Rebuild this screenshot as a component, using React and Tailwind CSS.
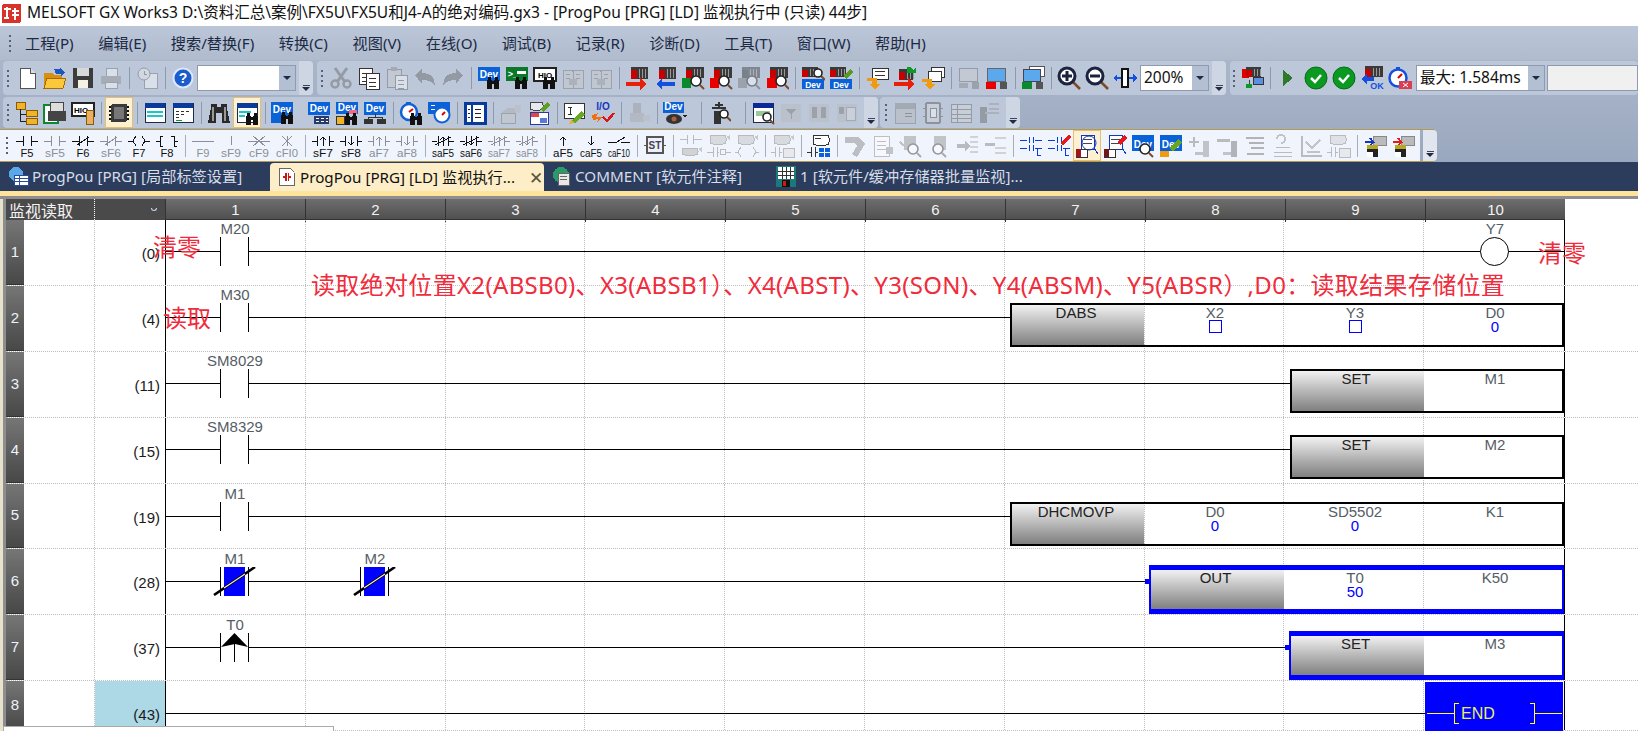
import React from 'react';

const MONO = 'Liberation Sans, sans-serif';

function Ic({ children }) {
  return (
    <svg viewBox="0 0 24 24" width="24" height="24" shapeRendering="crispEdges">
      {children}
    </svg>
  );
}

function Txt({ x, y, s = 10, fill = '#fff', b = true, len, children }) {
  return (
    <text
      x={x}
      y={y}
      fontSize={s}
      fill={fill}
      textAnchor="middle"
      fontWeight={b ? 700 : 400}
      fontFamily={MONO}
      textLength={len}
      lengthAdjust={len ? 'spacingAndGlyphs' : undefined}
    >
      {children}
    </text>
  );
}

// small building blocks for the pixel icons
const Dev = ({ x = 1, y = 1, w = 22, h = 13, bg = '#0a62d8' }) => (
  <g>
    <rect x={x} y={y} width={w} height={h} fill={bg} />
    <Txt x={x + w / 2} y={y + h - 3} s={10}>Dev</Txt>
  </g>
);
const Bin = ({ x = 10, y = 12 }) => (
  <g fill="#111">
    <rect x={x} y={y + 3} width="5" height="9" />
    <rect x={x + 7} y={y + 3} width="5" height="9" />
    <rect x={x + 1} y={y} width="3" height="4" />
    <rect x={x + 8} y={y} width="3" height="4" />
    <rect x={x + 4} y={y + 4} width="4" height="3" />
  </g>
);
const Plc = ({ x = 5, y = 1, w = 18, h = 11 }) => (
  <g>
    <rect x={x} y={y} width={w} height={h} fill="#3a3a3a" />
    <rect x={x} y={y + 3} width="6" height={h - 3} fill="#c80000" />
    <path d={`M${x + 8} ${y + 2}v${h - 3}M${x + 11} ${y + 2}v${h - 3}M${x + 14} ${y + 2}v${h - 3}`} stroke="#9a9a9a" />
  </g>
);
const Mag = ({ x = 15, y = 14, r = 5 }) => (
  <g shapeRendering="auto">
    <line x1={x + r - 1} y1={y + r - 1} x2={x + r + 3} y2={y + r + 3} stroke="#7a4a2a" strokeWidth="2" />
    <circle cx={x} cy={y} r={r} fill="#fff" stroke="#222" strokeWidth="1.6" />
  </g>
);
const Win = ({ x = 2, y = 2, w = 20, h = 19, bar = '#0a3a9a' }) => (
  <g>
    <rect x={x} y={y} width={w} height={h} fill="#fff" stroke="#1b2b4a" />
    <rect x={x} y={y} width={w} height="5" fill={bar} />
  </g>
);
const RedR = () => <path d="M1 16h14v-4l6 6-6 6v-4H1z" fill="#e8200a" />;
const BlueL = () => <path d="M22 16H9v-4l-6 6 6 6v-4h13z" fill="#1450e0" />;
const Doc = ({ x = 4, y = 2, w = 15, h = 20, s = '#555' }) => (
  <g>
    <rect x={x} y={y} width={w} height={h} fill="#fff" stroke={s} />
    <path d={`M${x + 3} ${y + 5}h${w - 6}M${x + 3} ${y + 9}h${w - 6}M${x + 3} ${y + 13}h${w - 6}`} stroke={s} />
  </g>
);

const ICONS = {
  new: <g><path d="M5 2h10l5 5v15H5z" fill="#fff" stroke="#555" /><path d="M15 2v5h5" fill="#ddd" stroke="#555" /></g>,
  open: <g><path d="M1 7h8l2 2h8v12H1z" fill="#d89010" /><path d="M4 12h19l-3 10H1z" fill="#fbc83c" stroke="#a86a08" /><path d="M11 3h6v-1l5 4-4 5V8h-5z" fill="#1a58c0" /></g>,
  save: <g><rect x="2" y="2" width="20" height="20" fill="#3c3c3c" /><rect x="6" y="2" width="12" height="8" fill="#d8d8d8" /><rect x="7" y="14" width="10" height="8" fill="#f4f0e4" /></g>,
  print: <g><rect x="7" y="2" width="11" height="8" fill="#fff" stroke="#777" /><rect x="2" y="10" width="20" height="8" fill="#8a8f98" /><rect x="6" y="16" width="12" height="6" fill="#fff" stroke="#777" /></g>,
  clock: <g><rect x="9" y="7" width="13" height="15" fill="#fff" stroke="#777" /><g shapeRendering="auto"><circle cx="9" cy="8" r="6" fill="#eee" stroke="#666" /></g><path d="M9 5v3h3" stroke="#666" fill="none" /></g>,
  help: <g shapeRendering="auto"><circle cx="12" cy="12" r="10.5" fill="#dbe8ff" /><circle cx="12" cy="12" r="8.5" fill="#1b5ccc" /><Txt x={12} y={17} s={14}>?</Txt></g>,
  cut: <g shapeRendering="auto"><path d="M6 2l10 14M18 2L8 16" stroke="#666" strokeWidth="3" /><circle cx="6" cy="18" r="3.5" fill="none" stroke="#666" strokeWidth="2.5" /><circle cx="18" cy="18" r="3.5" fill="none" stroke="#666" strokeWidth="2.5" /></g>,
  copy: <g><Doc x={2} y={2} w={13} h={16} s="#333" /><Doc x={9} y={7} w={13} h={16} s="#333" /></g>,
  paste: <g><rect x="2" y="3" width="14" height="18" fill="#c8ccd2" stroke="#666" /><rect x="6" y="1" width="6" height="4" fill="#888" /><Doc x={10} y={9} w={12} h={14} s="#666" /></g>,
  undo: <path d="M2 9l7-6v4c8 0 13 3 13 13-3-5-7-6-13-6v4z" fill="#5f6670" />,
  redo: <path d="M22 9l-7-6v4C7 7 2 10 2 20c3-5 7-6 13-6v4z" fill="#5f6670" />,
  devBin: <g><Dev h={14} /><Bin x={10} y={11} /></g>,
  conBin: <g><rect x="1" y="1" width="22" height="14" fill="#0a7a2a" /><Txt x={8} y={11} s={9}>&gt;_</Txt><rect x="12" y="5" width="9" height="3" fill="#fff" /><Bin x={10} y={11} /></g>,
  hioBin: <g><rect x="1" y="2" width="22" height="13" fill="#fff" stroke="#222" strokeWidth="1.5" /><Txt x={12} y={12} s={8} fill="#000">HIO</Txt><Bin x={10} y={11} /></g>,
  book1: <g><path d="M2 4h9l1 2 1-2h9v18H2z" fill="#c4c8ce" stroke="#777" /><path d="M12 6v16M5 8h4M5 12h4M15 8h4M15 12h4" stroke="#777" /><rect x="8" y="13" width="8" height="6" fill="#999" /></g>,
  write: <g><Plc x={6} y={1} w={17} h={12} /><RedR /></g>,
  read: <g><Plc x={6} y={1} w={17} h={12} /><BlueL /></g>,
  verify: <g><Plc x={5} y={1} w={18} h={11} /><rect x="1" y="12" width="9" height="10" fill="#0a8a2a" /><Mag x={15} y={15} /></g>,
  verify2: <g><Plc x={5} y={1} w={18} h={11} /><rect x="1" y="12" width="9" height="10" fill="#e80000" /><Mag x={15} y={15} /></g>,
  verify3: <g><Plc x={5} y={1} w={18} h={11} /><rect x="1" y="12" width="9" height="10" fill="#777" /><Mag x={15} y={15} /></g>,
  verify4: <g><Plc x={5} y={1} w={18} h={11} /><rect x="2" y="12" width="10" height="10" fill="#e80000" /><Mag x={16} y={15} /></g>,
  plcDev: <g><Plc x={1} y={1} w={16} h={10} /><Mag x={17} y={7} r={4} /><rect x="1" y="13" width="22" height="10" fill="#0a62d8" /><Txt x={12} y={21.5} s={8.5}>Dev</Txt></g>,
  plcDev2: <g><Plc x={1} y={1} w={16} h={10} /><path d="M14 10l7-7 3 3-7 7z" fill="#5a9a20" /><rect x="1" y="13" width="22" height="10" fill="#0a62d8" /><Txt x={12} y={21.5} s={8.5}>Dev</Txt></g>,
  note: <g><rect x="7" y="2" width="16" height="11" fill="#fff" stroke="#333" /><path d="M10 5h10M10 9h10" stroke="#333" /><path d="M2 12h10v6h3l-5 6-6-6h3v-3H2z" fill="#f09a10" /></g>,
  noteW: <g><Plc x={6} y={3} w={14} h={11} /><path d="M14 1h3l3 3 3-3v6h-9z" fill="#0a9a2a" /><RedR /></g>,
  noteR: <g><rect x="10" y="1" width="13" height="10" fill="#fff" stroke="#333" /><rect x="7" y="5" width="13" height="10" fill="#fff" stroke="#333" /><path d="M1 13h10v5h3l-5 6-6-6h3v-2H1z" fill="#f09a10" /></g>,
  screen: <g><rect x="2" y="2" width="18" height="13" fill="#c8ccd2" stroke="#666" /><rect x="2" y="17" width="9" height="5" fill="#888" /><rect x="15" y="16" width="7" height="7" fill="#777" /></g>,
  screen2: <g><rect x="2" y="2" width="18" height="13" fill="#5ba8ec" stroke="#666" /><rect x="1" y="16" width="10" height="7" fill="#e80000" /><rect x="15" y="16" width="7" height="7" fill="#555" /></g>,
  screen3: <g><rect x="8" y="0" width="15" height="10" fill="#fff" stroke="#555" /><rect x="2" y="3" width="17" height="12" fill="#5ba8ec" stroke="#445" /><rect x="1" y="16" width="10" height="7" fill="#0a8a2a" /><rect x="15" y="16" width="7" height="7" fill="#555" /></g>,
  zoomIn: <g shapeRendering="auto"><line x1="15" y1="15" x2="23" y2="23" stroke="#7a4a2a" strokeWidth="2.5" /><circle cx="10" cy="10" r="8" fill="#fff" stroke="#1b2340" strokeWidth="3" /><path d="M5 10h10M10 5v10" stroke="#1b2340" strokeWidth="3" /></g>,
  zoomOut: <g shapeRendering="auto"><line x1="15" y1="15" x2="23" y2="23" stroke="#7a4a2a" strokeWidth="2.5" /><circle cx="10" cy="10" r="8" fill="#fff" stroke="#1b2340" strokeWidth="3" /><path d="M5 10h10" stroke="#1b2340" strokeWidth="3" /></g>,
  fit: <g><rect x="9" y="3" width="6" height="18" fill="#fff" stroke="#111" strokeWidth="2" /><path d="M0 12l4-4v3h4v2H4v3zM24 12l-4-4v3h-4v2h4v3z" fill="#1450e0" /></g>,
  net: <g><rect x="2" y="3" width="7" height="9" fill="#d00" /><Plc x={6} y={1} w={15} h={10} /><rect x="13" y="11" width="10" height="7" fill="#5b8fe0" stroke="#333" /><path d="M9 14v6h3" stroke="#444" fill="none" /><rect x="6" y="18" width="6" height="4" fill="#0a9a2a" /></g>,
  play: <path d="M7 4l10 8-10 8z" fill="#2f7a2a" />,
  ok: <g shapeRendering="auto"><circle cx="12" cy="12" r="11" fill="#0a9a22" stroke="#0a6a18" /><path d="M7 12l4 4 6-7" stroke="#fff" strokeWidth="2.5" fill="none" /></g>,
  plcOk: <g><Plc x={5} y={0} w={18} h={11} /><path d="M14 11H7V8l-6 5 6 5v-3h7z" fill="#1450e0" /><Txt x={17} y={23} s={9} fill="#1450e0">OK</Txt></g>,
  timer: <g shapeRendering="auto"><circle cx="10" cy="12" r="8.5" fill="#fff" stroke="#1450e0" strokeWidth="2.5" /><rect x="8" y="1" width="4" height="3" fill="#1450e0" /><path d="M10 12l4-4" stroke="#d00" strokeWidth="2" /><rect x="11" y="15" width="13" height="8" fill="#d84050" /><path d="M15 17l5 4M20 17l-5 4" stroke="#fff" /></g>,
  tree: <g><rect x="1" y="1" width="9" height="7" fill="#f0b428" stroke="#8a5a08" /><path d="M5 8v12h6M5 13h6" stroke="#222" fill="none" /><rect x="11" y="9" width="11" height="6" fill="#f0b428" stroke="#8a5a08" /><rect x="11" y="17" width="11" height="6" fill="#f0b428" stroke="#8a5a08" /></g>,
  printPrev: <g><rect x="1" y="4" width="14" height="18" fill="#fff" stroke="#0a8a2a" strokeWidth="2" /><rect x="7" y="1" width="13" height="9" fill="#ddd" stroke="#444" /><rect x="5" y="10" width="18" height="10" fill="#444" /></g>,
  hioTag: <g><rect x="1" y="2" width="22" height="13" fill="#fff" stroke="#222" strokeWidth="1.5" /><Txt x={10} y={12} s={8} fill="#000">HIO</Txt><rect x="15" y="9" width="7" height="14" fill="#e8b060" stroke="#8a5a08" /></g>,
  chip: <g><path d="M2 6h20M2 10h20M2 14h20M2 18h20" stroke="#111" strokeWidth="2" /><rect x="4" y="3" width="16" height="18" rx="2" fill="#3a3a3a" /><rect x="7" y="6" width="10" height="12" fill="#777" /></g>,
  win1: <g><Win /><path d="M4 11h16M4 15h16" stroke="#18c8c8" strokeWidth="2" /></g>,
  win2: <g><Win /><path d="M5 10h3M10 10h3M15 10h3M5 13h3M10 13h3M5 16h3" stroke="#333" /><path d="M5 19h6" stroke="#0a9a2a" /></g>,
  binBk: <g><path d="M4 3h6v3h4V3h6v4l3 15h-8V12h-6v10H1L4 7z" fill="#2a2a2a" /><path d="M6 6v14M18 6v14" stroke="#999" strokeWidth="2" /></g>,
  winBin: <g><Win /><path d="M4 11h12M4 15h6" stroke="#18c8c8" strokeWidth="2" /><Bin x={11} y={12} /></g>,
  devDrop: <g><Dev x={0} h={14} /><rect x="0" y="15" width="10" height="7" fill="#0a62d8" /><Bin x={10} y={11} /></g>,
  devTable: <g><Dev h={13} /><rect x="7" y="15" width="15" height="8" fill="#2a3a6a" /><path d="M9 17h3M14 17h3M19 17h2M9 20h3M14 20h3M19 20h2" stroke="#fff" /></g>,
  devRed: <g><Dev h={12} /><rect x="14" y="9" width="8" height="4" fill="#f06a80" /><rect x="1" y="15" width="8" height="8" fill="#f0b428" stroke="#333" /><Bin x={10} y={12} /></g>,
  devNet: <g><Dev h={13} /><path d="M12 13v3M5 16h14M5 16v2M19 16v2" stroke="#333" /><rect x="1" y="18" width="9" height="5" fill="#333" /><rect x="14" y="18" width="9" height="5" fill="#333" /></g>,
  watchBin: <g shapeRendering="auto"><circle cx="10" cy="11" r="8" fill="#fff" stroke="#1060d8" strokeWidth="2.5" /><path d="M10 11l4-3" stroke="#d00" strokeWidth="2" /><rect x="7" y="1" width="5" height="2" fill="#1060d8" /><Bin x={11} y={12} /></g>,
  devWatch: <g><rect x="1" y="1" width="22" height="12" fill="#0a62d8" /><path d="M4 4h4M4 8h4" stroke="#fff" /><g shapeRendering="auto"><circle cx="15" cy="14" r="7.5" fill="#fff" stroke="#1060d8" strokeWidth="2" /><path d="M15 14l3-3" stroke="#d00" strokeWidth="2" /></g></g>,
  list: <g><rect x="2" y="2" width="20" height="20" fill="#fff" stroke="#0a3a9a" strokeWidth="3" /><path d="M9 3v18" stroke="#0a3a9a" strokeWidth="2" /><path d="M5 8h2M5 12h2M5 16h2M12 8h6M12 12h6M12 16h6" stroke="#222" /></g>,
  stack: <g><path d="M2 12l7-5h13l-6 5z" fill="#aab" /><rect x="2" y="12" width="14" height="10" fill="#c4c8ce" stroke="#777" /><rect x="16" y="4" width="6" height="8" fill="#bbb" /></g>,
  devColor: <g><rect x="3" y="1" width="13" height="8" rx="3" fill="#e8e8f0" stroke="#444" /><path d="M13 8l7-7 3 3-7 7z" fill="#60a020" /><rect x="3" y="11" width="18" height="12" fill="#fff" stroke="#2a3a9a" /><rect x="4" y="12" width="8" height="4" fill="#e04848" /><rect x="13" y="17" width="7" height="5" fill="#5a78d8" /></g>,
  editI: <g><rect x="1" y="2" width="20" height="15" fill="#fff" stroke="#333" /><path d="M7 6v7M5 6h4M5 13h4" stroke="#333" /><path d="M8 20l10-10 4 4-10 8z" fill="#68a820" /><path d="M6 23l2-4 3 3z" fill="#e0b040" /></g>,
  io: <g><Txt x={12} y={9} s={10} fill="#1436c0">I/O</Txt><path d="M1 14l6-2-2 4 6 0-5 6 1-4-5 1z" fill="#f07010" /><path d="M12 16l4 4 7-8" stroke="#d81818" strokeWidth="2.5" fill="none" /></g>,
  gears: <g><rect x="6" y="2" width="8" height="10" fill="#999" /><rect x="3" y="12" width="14" height="9" fill="#aaa" /><rect x="16" y="14" width="7" height="6" fill="#bbb" /></g>,
  devEye: <g><Dev x={0} w={21} h={11} /><g shapeRendering="auto"><ellipse cx="11" cy="18" rx="8" ry="5" fill="#333" /><circle cx="11" cy="18" r="2.5" fill="#a8623a" /></g><path d="M20 14h4l-2 3z" fill="#222" /></g>,
  lamp: <g><path d="M8 4h8M12 1v6M5 7h14" stroke="#333" strokeWidth="2" /><rect x="7" y="10" width="7" height="13" fill="#333" /><Mag x={17} y={13} r={4} /></g>,
  winMag: <g><Win bar="#0a2a9a" /><rect x="5" y="10" width="14" height="5" fill="#9ac89a" /><Mag x={16} y={16} r={4} /></g>,
  t1: <g><rect x="2" y="3" width="20" height="18" fill="#bbb" /><path d="M7 8h10l-5 5zM12 13v5" stroke="#777" fill="#777" /></g>,
  t2: <g><rect x="2" y="3" width="20" height="18" fill="#bbb" /><rect x="5" y="6" width="5" height="11" fill="#777" /><rect x="14" y="6" width="5" height="11" fill="#777" /></g>,
  t3: <g><rect x="2" y="3" width="20" height="18" fill="#bbb" /><rect x="11" y="6" width="9" height="13" fill="#ddd" stroke="#888" /><rect x="4" y="6" width="5" height="7" fill="#777" /></g>,
  g1: <g><rect x="2" y="2" width="20" height="20" fill="#bbb" stroke="#777" /><rect x="2" y="2" width="20" height="6" fill="#888" /><path d="M12 12h7M12 15h7" stroke="#555" /></g>,
  g2: <g><rect x="5" y="2" width="14" height="20" rx="2" fill="#d8d8d8" stroke="#555" strokeWidth="2" /><rect x="9" y="7" width="6" height="9" fill="#fff" stroke="#555" /><path d="M2 7h3M2 15h3M19 7h3M19 15h3" stroke="#555" /></g>,
  g3: <g><rect x="2" y="3" width="20" height="18" fill="#d8d8d8" stroke="#666" /><path d="M2 8h20M2 13h20M2 17h20M8 3v18" stroke="#666" /></g>,
  g4: <g><rect x="3" y="6" width="7" height="16" fill="#666" /><path d="M12 3h10M12 8h10M8 12h14" stroke="#999" strokeWidth="2" /></g>,
  st: <g><rect x="4" y="3" width="16" height="16" fill="#eef" stroke="#555" strokeWidth="2" /><path d="M1 11h3M20 11h3" stroke="#555" /><Txt x={12} y={15} s={10} fill="#444">ST</Txt></g>,
  fbA: <g><path d="M1 5h7M8 1v9M14 1v9M14 5h9" stroke="#777" /><rect x="3" y="14" width="16" height="7" rx="3" fill="#aaa" stroke="#777" /><path d="M19 15l4-2v6z" fill="#999" /></g>,
  fbB: <g><rect x="3" y="1" width="16" height="9" rx="3" fill="#bbb" stroke="#777" /><path d="M19 3l4-2v6z" fill="#999" /><path d="M0 18h6M6 13v10M10 13v10M10 18h2M13 18a3 3 0 0 1 6 0a3 3 0 0 1-6 0M19 18h5" stroke="#777" fill="none" /></g>,
  fbC: <g><rect x="3" y="1" width="16" height="9" rx="3" fill="#bbb" stroke="#777" /><path d="M19 3l4-2v6z" fill="#999" /><path d="M0 18h4M6 13l-3 5 3 5M18 13l3 5-3 5M21 18h3" stroke="#777" fill="none" /></g>,
  fbD: <g><rect x="3" y="1" width="16" height="9" rx="3" fill="#bbb" stroke="#777" /><path d="M19 3l4-2v6z" fill="#999" /><path d="M0 18h4M4 13v10M8 13v10M8 18h3" stroke="#777" fill="none" /><rect x="12" y="14" width="11" height="9" fill="#ddd" stroke="#777" /></g>,
  fbE: <g><rect x="6" y="1" width="16" height="10" rx="3" fill="#fff" stroke="#333" /><path d="M8 4h6" stroke="#333" /><path d="M0 18h4M4 13v10M8 13v10M8 18h3" stroke="#333" fill="none" /><rect x="12" y="14" width="11" height="9" fill="#0a62d8" /><path d="M12 18h11M17 14v9" stroke="#fff" /></g>,
  tag: <path d="M2 3h13l7 7-8 13-5-3 5-8-2-3H2z" fill="#7a8088" />,
  docG: <g><Doc x={3} y={2} w={15} h={20} s="#808080" /><rect x="15" y="13" width="7" height="7" fill="#888" /></g>,
  magL: <g><rect x="5" y="2" width="12" height="14" fill="#888" /><path d="M5 12L1 8" stroke="#888" strokeWidth="2" /><Mag x={14} y={15} r={5} /></g>,
  magR: <g><rect x="7" y="2" width="12" height="14" fill="#888" /><Mag x={11} y={15} r={5} /></g>,
  arrL: <g><path d="M2 10h8V6l5 6-5 6v-4H2z" fill="#777" /><path d="M15 3h8M15 8h8M15 13h8M15 18h8" stroke="#aaa" strokeWidth="2" /></g>,
  arrR: <g><path d="M2 9h10v3H2z" fill="#777" /><path d="M12 4h11M12 14h11M12 19h11" stroke="#aaa" strokeWidth="2" /></g>,
  rung: <g stroke="#0a3ad8" fill="none"><path d="M1 6h7M10 3v6M14 3v6M16 6h7M1 14h7M10 11v6M14 11v6M16 14h7M18 14v7h4" /></g>,
  rungP: <g stroke="#0a3ad8" fill="none"><path d="M1 6h7M10 3v6M14 3v6M1 14h7M10 11v6M14 11v6M16 14h7M18 14v7h4" /><path d="M14 9l8-8 2 2-8 8z" fill="#e81818" stroke="#e81818" /></g>,
  docMag: <g><rect x="6" y="1" width="13" height="14" fill="#fff" stroke="#1436c0" /><path d="M8 5h9M8 9h9" stroke="#445" /><g shapeRendering="auto"><circle cx="14" cy="9" r="7" fill="none" stroke="#1436c0" /></g><path d="M19 14l4 6" stroke="#1436c0" /><rect x="1" y="15" width="11" height="8" fill="#fff" stroke="#333" /><rect x="1" y="15" width="5" height="8" fill="#a01818" /></g>,
  docMagR: <g><rect x="6" y="1" width="13" height="14" fill="#fff" stroke="#1436c0" /><path d="M8 5h9M8 9h9" stroke="#445" /><path d="M14 8l7-7 3 3-7 7z" fill="#e81818" /><path d="M19 14l4 6" stroke="#1436c0" /><rect x="1" y="15" width="11" height="8" fill="#fff" stroke="#333" /><rect x="1" y="15" width="5" height="8" fill="#701818" /></g>,
  devMag: <g><Dev h={16} /><Mag x={14} y={15} r={5} /></g>,
  devPen: <g><Dev h={16} /><rect x="1" y="17" width="9" height="6" fill="#f09a10" /><path d="M10 14l9-9 4 3-9 9z" fill="#68a820" /></g>,
  plusBar: <g><path d="M2 8h10M7 3v10" stroke="#777" strokeWidth="2" /><rect x="16" y="7" width="6" height="16" fill="#888" /><path d="M8 19h8" stroke="#888" strokeWidth="3" /></g>,
  minusBar: <g><path d="M2 6h13" stroke="#777" strokeWidth="3" /><rect x="16" y="7" width="6" height="16" fill="#666" /><path d="M8 19h8" stroke="#888" strokeWidth="3" /></g>,
  lines: <path d="M3 4h18M6 9h15M8 14h13M4 20h17" stroke="#666" strokeWidth="2" />,
  lines2: <g><path d="M6 5a4 4 0 1 1 4 4" stroke="#888" strokeWidth="2" fill="none" /><path d="M5 13h14M3 18h18M3 22h18" stroke="#777" /></g>,
  check2: <g><path d="M3 2v20h20" stroke="#777" strokeWidth="2" fill="none" /><path d="M7 8l6 6 8-8M8 18h13" stroke="#888" strokeWidth="1.5" fill="none" /></g>,
  fbF: <g><rect x="3" y="1" width="16" height="9" rx="3" fill="#ccc" stroke="#777" /><path d="M0 18h4M4 13v10M8 13v10M8 18h3" stroke="#777" fill="none" /><rect x="12" y="14" width="11" height="9" fill="#ddd" stroke="#777" /></g>,
  mixB: <g><rect x="10" y="2" width="13" height="9" fill="#bbb" stroke="#888" /><path d="M2 8h8l-3-4M7 12l3-4" stroke="#1436c0" strokeWidth="2" fill="none" /><rect x="4" y="11" width="11" height="12" fill="#222" /><rect x="4" y="11" width="11" height="4" fill="#b8a820" /><rect x="4" y="18" width="6" height="5" fill="#fff" /></g>,
  mixR: <g><rect x="10" y="2" width="13" height="9" fill="#bbb" stroke="#888" /><path d="M2 8h8l-3-4M7 12l3-4" stroke="#e81818" strokeWidth="2" fill="none" /><rect x="4" y="11" width="11" height="12" fill="#222" /><rect x="4" y="11" width="11" height="4" fill="#b8a820" /><rect x="4" y="18" width="6" height="5" fill="#fff" /></g>,
};

function Grip({ w = 'w-[10px]' }) {
  return (
    <div className={`${w} h-full flex flex-col items-center justify-center gap-[3px] shrink-0`}>
      {[0, 1, 2, 3].map(i => (
        <span key={i} className="w-[2px] h-[2px] bg-[#55627a]" />
      ))}
    </div>
  );
}

function Sep({ light }) {
  return (
    <div className="w-[8px] h-full flex items-center justify-center shrink-0">
      <span className={`w-px h-[22px] ${light ? 'bg-[#a7adb8]' : 'bg-[#8d99ae]'}`} />
    </div>
  );
}

function Cell({ token }) {
  const disabled = token[0] === '~';
  const active = token[0] === '!';
  const wide = token[0] === '+';
  const name = disabled || active || wide ? token.slice(1) : token;
  return (
    <div
      className={`h-full flex items-center justify-center shrink-0 ${wide ? 'w-[36px] pr-[8px]' : 'w-[28px]'} ${
        active ? 'bg-[#fdf1d2] outline outline-1 outline-[#e6bf72] -outline-offset-1' : ''
      } ${disabled ? 'opacity-45 grayscale' : ''}`}
    >
      <Ic>{ICONS[name]}</Ic>
    </div>
  );
}

function Icons({ list, light }) {
  return list.split(' ').map((t, i) => (t === '|' ? <Sep key={i} light={light} /> : <Cell key={i} token={t} />));
}

function Overflow({ light }) {
  return (
    <div className={`ml-[3px] w-[14px] h-full flex flex-col items-center justify-end pb-[4px] shrink-0 rounded-r-sm ${light ? 'bg-[#e0e5ee]' : 'bg-[#ced6e3]'}`}>
      <span className="w-[7px] h-px bg-[#3b4658] mb-px" />
      <span className="w-0 h-0 border-x-[4px] border-x-transparent border-t-[4px] border-t-[#1f2a44]" />
    </div>
  );
}

function Combo({ w, children }) {
  return (
    <div className={`${w} h-[26px] bg-white border border-[#8e9ab0] flex items-center shrink-0 text-[15.5px] text-[#111]`}>
      <span className="flex-1 pl-[3px] whitespace-nowrap overflow-hidden">{children}</span>
      <span className="w-[16px] h-full bg-[#b3bfd2] flex items-center justify-center">
        <span className="w-0 h-0 border-x-[4px] border-x-transparent border-t-[4px] border-t-[#1f2a44]" />
      </span>
    </div>
  );
}

function Bar({ children, className = '' }) {
  return <div className={`h-full flex items-center bg-[#bcc7d9] rounded-sm ${className}`}>{children}</div>;
}

const LAD = [
  ['M1 6h7M8 1v10M16 1v10M16 6h7', 'F5'],
  ['M1 6h7M8 1v10M16 1v10M16 6h7', 'sF5', 1],
  ['M1 6h7M8 1v10M16 1v10M16 6h7M6 10l12-8', 'F6'],
  ['M1 6h7M8 1v10M16 1v10M16 6h7M6 10l12-8', 'sF6', 1],
  ['M1 6h5M6 6l3-5M6 6l3 5M23 6h-5M18 6l-3-5M18 6l-3 5', 'F7'],
  ['M1 6h4M5 1v10M5 1h3M5 11h3M23 6h-4M19 1v10M19 1h-3M19 11h3', 'F8'],
  null,
  ['M1 6h22', 'F9', 1],
  ['M12 1v9', 'sF9', 1],
  ['M1 6h22M6 1l12 10M18 1L6 11', 'cF9', 1],
  ['M7 1l10 10M17 1L7 11M12 1v10', 'cFI0', 1],
  null,
  ['M1 6h5M6 1v10M18 1v10M18 6h5M12 11V2M9 5l3-3 3 3', 'sF7'],
  ['M1 6h5M6 1v10M18 1v10M18 6h5M12 1v9M9 7l3 3 3-3', 'sF8'],
  ['M1 6h5M6 1v10M18 1v10M18 6h5M12 11V2M9 5l3-3 3 3', 'aF7', 1],
  ['M1 6h5M6 1v10M18 1v10M18 6h5M12 1v9M9 7l3 3 3-3', 'aF8', 1],
  null,
  ['M1 6h5M7 1v10M17 1v10M18 6h5M12 11V2M9 5l3-3 3 3M4 10L20 2', 'saF5'],
  ['M1 6h5M7 1v10M17 1v10M18 6h5M12 1v9M9 7l3 3 3-3M4 10L20 2', 'saF6'],
  ['M1 6h5M7 1v10M17 1v10M18 6h5M12 11V2M9 5l3-3 3 3M4 10L20 2', 'saF7', 1],
  ['M1 6h5M7 1v10M17 1v10M18 6h5M12 1v9M9 7l3 3 3-3M4 10L20 2', 'saF8', 1],
  null,
  ['M12 11V2M9 5l3-3 3 3', 'aF5'],
  ['M12 1v9M9 7l3 3 3-3', 'caF5'],
  ['M1 7h9l8-5M14 7h9', 'caF10'],
];

function LadCell({ d, label, gray }) {
  const c = gray ? '#8a8f98' : '#111';
  const len = label.length === 2 ? 13 : label.length === 3 ? 20 : 22;
  return (
    <div className="w-[28px] h-full flex items-center justify-center shrink-0">
      <svg viewBox="0 0 24 26" width="24" height="26" shapeRendering="crispEdges">
        <path d={d} stroke={c} fill="none" transform="translate(0 2)" />
        <Txt x={12} y={24} s={11} fill={c} b={false} len={len}>{label}</Txt>
      </svg>
    </div>
  );
}

function Toolbars() {
  return (
    <div className="bg-gradient-to-b from-[#aab6ca] to-[#9aa8bf] pt-[1px]">
      {/* row 1 */}
      <div className="h-[34px] flex items-center pl-[3px] gap-[4px]">
        <Bar>
          <Grip />
          <Icons list="new open save ~print | ~clock | help" />
          <Combo w="w-[99px]" />
          <Overflow />
        </Bar>
        <Bar>
          <Grip />
          <Icons list="~cut copy ~paste ~undo ~redo | devBin conBin hioBin ~book1 ~book1 | write read verify verify2 ~verify3 verify4 | plcDev plcDev2 | note noteW noteR | ~screen screen2 | screen3 | zoomIn zoomOut fit" />
          <div className="w-px shrink-0" />
          <Combo w="w-[69px]">200%</Combo>
          <Overflow />
        </Bar>
        <Bar className="flex-1">
          <Grip w="w-[8px]" />
          <Icons list="net | play ok ok plcOk timer" />
          <div className="w-[2px] shrink-0" />
          <Combo w="w-[129px]">最大: 1.584ms</Combo>
          <div className="w-[2px] shrink-0" />
          <div className="flex-1 h-[26px] bg-[#f0f0f0] border border-[#8e9ab0]" />
        </Bar>
      </div>
      {/* row 2 */}
      <div className="h-[32px] mt-[2px] flex items-center pl-[3px] gap-[2px] pb-[1px]">
        <Bar>
          <Grip />
          <Icons list="tree printPrev hioTag | !chip | win1 win2 | binBk !winBin | +devDrop devTable devRed devNet | watchBin devWatch | list | ~stack devColor | editI io | ~gears | +devEye | +lamp | winMag ~t1 ~t2 ~t3" />
          <Overflow />
        </Bar>
        <Bar>
          <Grip w="w-[11px]" />
          <Icons list="~g1 ~g2 ~g3 ~g4" />
          <Overflow />
        </Bar>
      </div>
      {/* row 3 */}
      <div className="h-[33px] flex items-stretch">
        <div className="h-full flex items-center w-[1420px] bg-[#f0f4fc] border-y border-[#b29a52]">
          <Grip w="w-[13px]" />
          {LAD.map((l, i) => (l ? <LadCell key={i} d={l[0]} label={l[1]} gray={l[2]} /> : <Sep key={i} light />))}
          <Sep light />
          <Icons light list="st | ~fbA ~fbB ~fbC | ~fbD | fbE | ~tag ~docG ~magL ~magR ~arrL ~arrR | rung rungP !docMag docMagR devMag devPen ~plusBar ~minusBar ~lines ~lines2 ~check2 ~fbF | mixB mixR" />
        </div>
        <div className="w-[14px] border-y border-[#b29a52]">
          <Overflow light />
        </div>
      </div>
    </div>
  );
}

function Tabs() {
  return (
    <div className="h-[29px] bg-[#2b3c5c] flex items-stretch text-[15.2px] text-[#d6dce8]">
      <div className="w-[270px] flex items-center pl-[8px] gap-[3px]">
        <svg width="21" height="21" viewBox="0 0 21 21" shapeRendering="crispEdges">
          <circle cx="8" cy="8" r="7" fill="#5aa8e8" />
          <rect x="6" y="9" width="14" height="10" fill="#fff" stroke="#2a4a9a" />
          <path d="M6 12h14M6 15h14M11 9v10" stroke="#2a4a9a" />
        </svg>
        <span className="whitespace-nowrap">ProgPou [PRG] [局部标签设置]</span>
      </div>
      <div className="w-[274px] bg-[#fdeec8] rounded-t-sm flex items-center pl-[9px] text-[#111] mt-px">
        <svg width="16" height="20" viewBox="0 0 18 20" shapeRendering="crispEdges">
          <path d="M1 0h11l5 5v15H1z" fill="#fff" stroke="#555" />
          <path d="M4 10h3M11 10h3" stroke="#c81818" strokeWidth="2" />
          <path d="M7 6h2v8H7zM10 6h1v8h-1z" fill="#c81818" />
        </svg>
        <span className="whitespace-nowrap ml-[5px] w-[226px]">ProgPou [PRG] [LD] 监视执行...</span>
        <span className="text-[17px] leading-none text-[#5a5240] ml-[3px]">✕</span>
      </div>
      <div className="w-[224px] flex items-center pl-[8px] gap-[3px]">
        <svg width="20" height="21" viewBox="0 0 20 21" shapeRendering="crispEdges">
          <circle cx="9" cy="9" r="8" fill="#2a9a6a" />
          <rect x="6" y="7" width="11" height="12" fill="#e8e8e8" stroke="#666" />
          <path d="M8 10h7M8 13h7" stroke="#666" />
        </svg>
        <span className="whitespace-nowrap">COMMENT [软元件注释]</span>
      </div>
      <div className="flex items-center pl-[8px] gap-[4px]">
        <svg width="20" height="21" viewBox="0 0 20 21" shapeRendering="crispEdges">
          <rect x="0" y="0" width="20" height="21" fill="#1a7a7a" />
          <rect x="2" y="1" width="16" height="12" fill="#fff" />
          <path d="M6 1v12M10 1v12M14 1v12M2 5h16M2 9h16" stroke="#333" />
          <rect x="6" y="14" width="8" height="7" fill="#111" />
          <rect x="7" y="15" width="3" height="5" fill="#d01818" />
        </svg>
        <span className="whitespace-nowrap">1 [软元件/缓冲存储器批量监视]...</span>
      </div>
    </div>
  );
}

const HEIGHTS = [66, 66, 66, 66, 65, 66, 66, 50];
const STEPS = ['(0)', '(4)', '(11)', '(15)', '(19)', '(28)', '(37)', '(43)'];
const WIRE = [31, 31, 31, 31, 32, 32, 32, 32];
const COLS = [1, 2, 3, 4, 5, 6, 7, 8, 9, 10];

// ladder elements sit on a free canvas: one row of the rung diagram
function Contact({ x = 0, wire, label, kind }) {
  const top = wire - 14;
  return (
    <>
      <span className="absolute w-[80px] text-center text-[#555d66]" style={{ left: x + 29, top: wire - 31 }}>{label}</span>
      <svg className="absolute" style={{ left: x + 44, top }} width="50" height="29" viewBox="0 0 50 29" shapeRendering="crispEdges">
        <rect x="11" y="0" width="27" height="29" fill="#fff" />
        <path d="M10.5 0v29M38.5 0v29" stroke="#000" />
        {kind === 'nc' && (
          <g shapeRendering="auto">
            <rect x="14" y="0" width="21" height="29" fill="#0000ff" shapeRendering="crispEdges" />
            <line x1="4" y1="28" x2="45" y2="0" stroke="#000" strokeWidth="2.6" />
            <line x1="14" y1="21" x2="35" y2="7" stroke="#fff6b0" strokeWidth="1.2" />
          </g>
        )}
        {kind === 'rise' && (
          <g shapeRendering="auto">
            <path d="M11 14L24.5 0 38 14 25 11z" fill="#000" />
            <path d="M24.5 8v21" stroke="#000" />
          </g>
        )}
      </svg>
    </>
  );
}

function FuncBox({ left, top, blue, name, cells }) {
  return (
    <div
      className={`absolute flex text-[#555d66] ${blue ? 'border-x-2 border-y-[5px] border-[#0000ff] h-[49px]' : 'border-2 border-black h-[44px]'}`}
      style={{ left, top, width: 1398 - left }}
    >
      <div
        className="shrink-0 text-center bg-gradient-to-b from-[#f2f2f2] to-[#808080] text-[#222]"
        style={{ width: Math.floor((left + 139) / 140) * 140 - left - 4 }}
      >
        <span className="relative left-[-2px] top-[-1px]">{name}</span>
      </div>
      {cells.map((c, i) => (
        <div key={i} className="w-[140px] shrink-0 text-center leading-[14px] pt-[1px] pl-[2px]">
          <div>{c[0]}</div>
          {c[1] === 'box' ? (
            <div className="mx-auto w-[13px] h-[13px] border border-[#0000ff]" />
          ) : (
            <div className="text-[#0000ff]">{c[1]}</div>
          )}
        </div>
      ))}
    </div>
  );
}

function Rung({ i, end, children }) {
  const wire = WIRE[i];
  return (
    <div className="flex shrink-0 border-b border-dotted border-[#bdbdbd]" style={{ height: HEIGHTS[i] }}>
      <div className="w-[18px] shrink-0 bg-gradient-to-b from-[#767676] to-[#484848] border-b border-[#333] text-[#eef2f8] flex items-center justify-center">
        {i + 1}
      </div>
      <div className="w-[71px] shrink-0 border-r border-dotted border-[#bdbdbd]" />
      <div className={`w-[70px] shrink-0 relative text-[#1a1a1a] ${i === 7 ? 'bg-[#add8e6]' : ''}`}>
        <span className="absolute right-[5px] top-[23px]">{STEPS[i]}</span>
      </div>
      <div className="w-[1400px] shrink-0 relative border-x border-black leading-[17px]">
        <div className="absolute inset-0 grid grid-cols-10">
          {COLS.map(c => (
            <div key={c} className={c < 10 ? 'border-r border-dotted border-[#bdbdbd]' : ''} />
          ))}
        </div>
        <div className="absolute left-0 h-px bg-black" style={{ top: wire, width: end }} />
        {children}
      </div>
    </div>
  );
}

function Ladder() {
  return (
    <div className="flex-1 flex min-h-0">
      <div className="w-[3px] bg-[#e6e2cc] shrink-0" />
      <div className="w-[3px] bg-[#8e8e8e] shrink-0" />
      <div className="flex-1 flex flex-col bg-white text-[15px] overflow-hidden font-['Liberation_Sans','Noto_Sans_CJK_SC',sans-serif]">
        <div className="h-[21px] flex shrink-0 text-[#f2f2f2]">
          <div className="w-[89px] shrink-0 bg-[#4a4a4a] border-r border-dotted border-white flex items-center pl-[3px] text-[16px] font-['Noto_Sans_CJK_SC',sans-serif]">监视读取</div>
          <div className="w-[70px] shrink-0 bg-[#4a4a4a] flex items-center justify-end pr-[8px]">
            <span className="w-[6px] h-[3px] border-b border-x border-[#c8d4e8] rounded-b-sm" />
          </div>
          <div className="w-[1400px] grid grid-cols-10 bg-gradient-to-b from-[#6e6e6e] to-[#505050] border-b border-[#333]">
            {COLS.map(c => (
              <div key={c} className="flex items-center justify-center border-l border-[#333]">{c}</div>
            ))}
          </div>
        </div>

        <Rung i={0} end={1398}>
          <Contact wire={31} label="M20" />
          <span className="absolute left-[1289px] w-[80px] text-center text-[#555d66]" style={{ top: 0 }}>Y7</span>
          <div className="absolute left-[1314px] top-[17px] w-[29px] h-[29px] rounded-full border border-black bg-white" />
        </Rung>
        <Rung i={1} end={844}>
          <Contact wire={31} label="M30" />
          <FuncBox left={844} top={17} name="DABS" cells={[['X2', 'box'], ['Y3', 'box'], ['D0', '0']]} />
        </Rung>
        <Rung i={2} end={1124}>
          <Contact wire={31} label="SM8029" />
          <FuncBox left={1124} top={17} name="SET" cells={[['M1', '']]} />
        </Rung>
        <Rung i={3} end={1124}>
          <Contact wire={31} label="SM8329" />
          <FuncBox left={1124} top={17} name="SET" cells={[['M2', '']]} />
        </Rung>
        <Rung i={4} end={844}>
          <Contact wire={32} label="M1" />
          <FuncBox left={844} top={18} name="DHCMOVP" cells={[['D0', '0'], ['SD5502', '0'], ['K1', '']]} />
        </Rung>
        <Rung i={5} end={979}>
          <Contact wire={32} label="M1" kind="nc" />
          <Contact x={140} wire={32} label="M2" kind="nc" />
          <div className="absolute left-[979px] top-[30px] w-[5px] h-[5px] bg-[#0000ff]" />
          <FuncBox blue left={983} top={16} name="OUT" cells={[['T0', '50'], ['K50', '']]} />
        </Rung>
        <Rung i={6} end={1119}>
          <Contact wire={32} label="T0" kind="rise" />
          <div className="absolute left-[1119px] top-[30px] w-[5px] h-[5px] bg-[#0000ff]" />
          <FuncBox blue left={1123} top={16} name="SET" cells={[['M3', '']]} />
        </Rung>
        <Rung i={7} end={1259}>
          <div className="absolute left-[1259px] top-px w-[138px] h-[50px] bg-[#0000ff] text-[#e8f060]">
            <div className="absolute left-[2px] top-[31px] w-[27px] h-px bg-[#ffff40]" />
            <div className="absolute left-[29px] top-[21px] w-[5px] h-[21px] border-l border-y border-[#ffff40]" />
            <span className="absolute left-[36px] top-[23px] text-[16px]">END</span>
            <div className="absolute left-[105px] top-[21px] w-[5px] h-[21px] border-r border-y border-[#ffff40]" />
            <div className="absolute left-[110px] top-[31px] w-[27px] h-px bg-[#ffff40]" />
          </div>
        </Rung>
      </div>
    </div>
  );
}

const MENUS = ['工程(P)', '编辑(E)', '搜索/替换(F)', '转换(C)', '视图(V)', '在线(O)', '调试(B)', '记录(R)', '诊断(D)', '工具(T)', '窗口(W)', '帮助(H)'];

export default function App() {
  return (
    <div className="relative w-[1638px] h-[731px] overflow-hidden bg-white flex flex-col font-['Noto_Sans','Noto_Sans_CJK_SC',sans-serif]">
      <div className="h-[26px] shrink-0 flex items-center pl-[2px] gap-[6px] text-[15.5px] text-[#111] whitespace-nowrap">
        <svg width="19" height="19" viewBox="0 0 19 19" shapeRendering="crispEdges">
          <rect width="19" height="19" rx="2" fill="#d8322a" />
          <path d="M2 5h7M5 3v11M2 14h5M10 7h7M13 4v12M10 11h7" stroke="#fff" strokeWidth="1.5" />
        </svg>
        <span>MELSOFT GX Works3 D:\资料汇总\案例\FX5U\FX5U和J4-A的绝对编码.gx3 - [ProgPou [PRG] [LD] 监视执行中 (只读) 44步]</span>
      </div>

      <div className="h-[34px] shrink-0 bg-gradient-to-b from-[#bbc6d8] to-[#b0bbce] flex items-center pl-[5px] text-[15.2px] text-[#1c2a44]">
        <Grip />
        <div className="flex gap-[24.6px] pl-[10px] whitespace-nowrap">
          {MENUS.map(m => <span key={m}>{m}</span>)}
        </div>
      </div>

      <Toolbars />
      <Tabs />
      <div className="h-[5px] shrink-0 bg-[#ffe39d]" />
      <div className="h-[3px] shrink-0 bg-[#8e8e8e]" />
      <Ladder />

      {/* red notes typed over the screenshot, they cross the diagram */}
      <span className="absolute left-[153px] top-[232px] text-[24px] leading-[30px] text-[#f02c3c]">清零</span>
      <span className="absolute left-[163px] top-[303px] text-[24px] leading-[30px] text-[#f02c3c]">读取</span>
      <span className="absolute left-[1538px] top-[238px] text-[24px] leading-[30px] text-[#f02c3c]">清零</span>
      <span className="absolute left-[311px] top-[270px] text-[24px] tracking-[0.33px] leading-[30px] text-[#f02c3c] whitespace-nowrap">读取绝对位置X2(ABSB0)、X3(ABSB1）、X4(ABST)、Y3(SON)、Y4(ABSM)、Y5(ABSR）,D0：读取结果存储位置</span>

      <div className="absolute left-[3px] top-[726px] w-[331px] h-[10px] bg-white border border-[#aaa]" />
    </div>
  );
}
